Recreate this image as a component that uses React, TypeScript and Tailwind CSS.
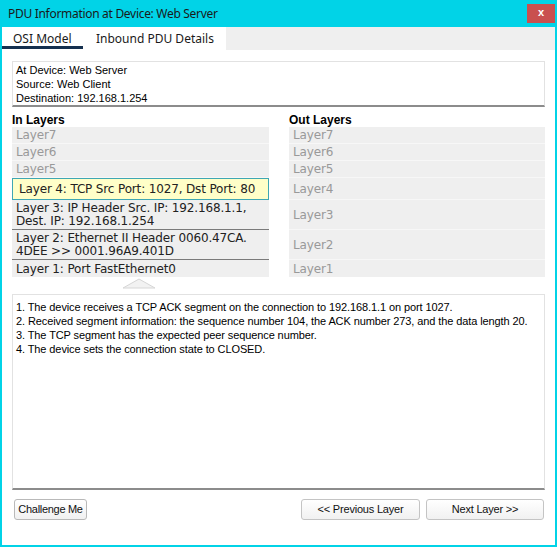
import React from "react";

const inRows = [
  { t: "Layer7", h: "h-[17px]" },
  { t: "Layer6", h: "h-[17px]" },
  { t: "Layer5", h: "h-[17px]" },
];

export default function App() {
  return (
    <div className="w-[557px] h-[547px] flex flex-col bg-white overflow-hidden" style={{ fontFamily: '"Liberation Sans", Arial, sans-serif' }}>
      {/* Title bar */}
      <div className="h-[27px] shrink-0 bg-[#01d3e7] flex items-center justify-between pl-[8px] pr-[2px]">
        <span className="text-[12px] text-[#1a1a1a] font-['Noto_Sans',sans-serif] tracking-[-0.3px]">PDU Information at Device: Web Server</span>
        <div className="w-[28px] h-[19px] bg-[#c9504f] flex items-center justify-center text-white text-[11px] font-bold leading-none pb-[2px]">x</div>
      </div>
      {/* Body */}
      <div className="flex-1 flex flex-col border-l-2 border-r-2 border-b-2 border-[#01d3e7]">
        {/* Tabs */}
        <div className="h-[23px] shrink-0 bg-[#efefef] flex items-stretch font-['Noto_Sans',sans-serif] text-[12px] text-[#1a1a1a]">
          <div className="w-[81px] bg-white relative flex items-start pt-[3px] pl-[11px]">
            OSI Model
            <div className="absolute left-0 right-0 bottom-[1px] h-[3px] bg-[#15304f]" />
          </div>
          <div className="w-[2px] bg-white" />
          <div className="w-[141px] bg-white flex items-start pt-[3px] pl-[11px]">Inbound PDU Details</div>
        </div>
        {/* Content */}
        <div className="flex-1 flex flex-col px-[10px]">
          <div className="mt-[11px] h-[46px] border border-[#e2e2e2] border-b-2 border-b-[#8c8c8c] px-[3px] pt-[1px] text-[11px] leading-[14px] text-black">
            <div>At Device: Web Server</div>
            <div>Source: Web Client</div>
            <div>Destination: 192.168.1.254</div>
          </div>

          <div className="flex gap-[20px] mt-[6px]">
            {/* In Layers */}
            <div className="w-[257px] flex flex-col">
              <div className="h-[14px] text-[12px] leading-[14px] font-bold text-black">In Layers</div>
              <div className="flex flex-col bg-[#efefef] font-['DejaVu_Sans',sans-serif] text-[12px] tracking-[-0.15px]">
                {inRows.map((r) => (
                  <div key={r.t} className={`${r.h} flex items-center pl-[4px] text-[#999999] border-b border-[#f7f7f7]`}>{r.t}</div>
                ))}
                <div className="h-[22px] flex items-center pl-[6px] bg-[#ffffc8] border border-[#3fa7b3] text-[#222] whitespace-nowrap">Layer 4: TCP Src Port: 1027, Dst Port: 80</div>
                <div className="h-[30px] flex flex-col justify-center pl-[4px] leading-[13px] text-[#222] border-b border-[#7a7a7a] whitespace-nowrap">
                  <div>Layer 3: IP Header Src. IP: 192.168.1.1,</div>
                  <div>Dest. IP: 192.168.1.254</div>
                </div>
                <div className="h-[30px] flex flex-col justify-center pl-[4px] leading-[13px] text-[#222] border-b border-[#7a7a7a] whitespace-nowrap">
                  <div>Layer 2: Ethernet II Header 0060.47CA.</div>
                  <div>4DEE &gt;&gt; 0001.96A9.401D</div>
                </div>
                <div className="h-[17px] flex items-center pl-[4px] text-[#222]">Layer 1: Port FastEthernet0</div>
              </div>
              <div className="h-[12px] flex justify-center pr-[4px]">
                <svg width="34" height="12" viewBox="0 0 34 12">
                  <polygon points="1,11 17,2 33,11" fill="#f2f2f2" stroke="#d6d6d6" strokeWidth="1" />
                </svg>
              </div>
            </div>
            {/* Out Layers */}
            <div className="w-[256px] flex flex-col">
              <div className="h-[14px] text-[12px] leading-[14px] font-bold text-black">Out Layers</div>
              <div className="flex flex-col bg-[#efefef] font-['DejaVu_Sans',sans-serif] text-[12px] tracking-[-0.15px] text-[#999999]">
                <div className="h-[17px] flex items-center pl-[4px] border-b border-[#f7f7f7]">Layer7</div>
                <div className="h-[17px] flex items-center pl-[4px] border-b border-[#f7f7f7]">Layer6</div>
                <div className="h-[17px] flex items-center pl-[4px] border-b border-[#f7f7f7]">Layer5</div>
                <div className="h-[22px] flex items-center pl-[4px] border-b border-[#f7f7f7]">Layer4</div>
                <div className="h-[30px] flex items-center pl-[4px] border-b border-[#f7f7f7]">Layer3</div>
                <div className="h-[30px] flex items-center pl-[4px] border-b border-[#f7f7f7]">Layer2</div>
                <div className="h-[17px] flex items-center pl-[4px]">Layer1</div>
              </div>
            </div>
          </div>

          <div className="mt-[5px] h-[196px] border border-[#e2e2e2] border-b-2 border-b-[#8c8c8c] px-[3px] pt-[5px] text-[11px] leading-[14px] text-black tracking-[-0.1px]">
            <div>1. The device receives a TCP ACK segment on the connection to 192.168.1.1 on port 1027.</div>
            <div>2. Received segment information: the sequence number 104, the ACK number 273, and the data length 20.</div>
            <div>3. The TCP segment has the expected peer sequence number.</div>
            <div>4. The device sets the connection state to CLOSED.</div>
          </div>

          <div className="mt-[9px] flex items-center text-[11px] tracking-[-0.2px] text-[#111] whitespace-nowrap">
            <button className="ml-[2px] w-[73px] h-[21px] px-0 rounded-[3px] border border-[#b9b9b9] bg-gradient-to-b from-white to-[#f1f1f1] whitespace-nowrap tracking-[-0.3px]">Challenge Me</button>
            <div className="flex-1" />
            <button className="w-[119px] h-[21px] rounded-[3px] border border-[#c4c4c4] bg-gradient-to-b from-white to-[#f1f1f1]">&lt;&lt; Previous Layer</button>
            <button className="ml-[6px] mr-[1px] w-[118px] h-[21px] rounded-[3px] border border-[#c4c4c4] bg-gradient-to-b from-white to-[#f1f1f1]">Next Layer &gt;&gt;</button>
          </div>
        </div>
      </div>
    </div>
  );
}
